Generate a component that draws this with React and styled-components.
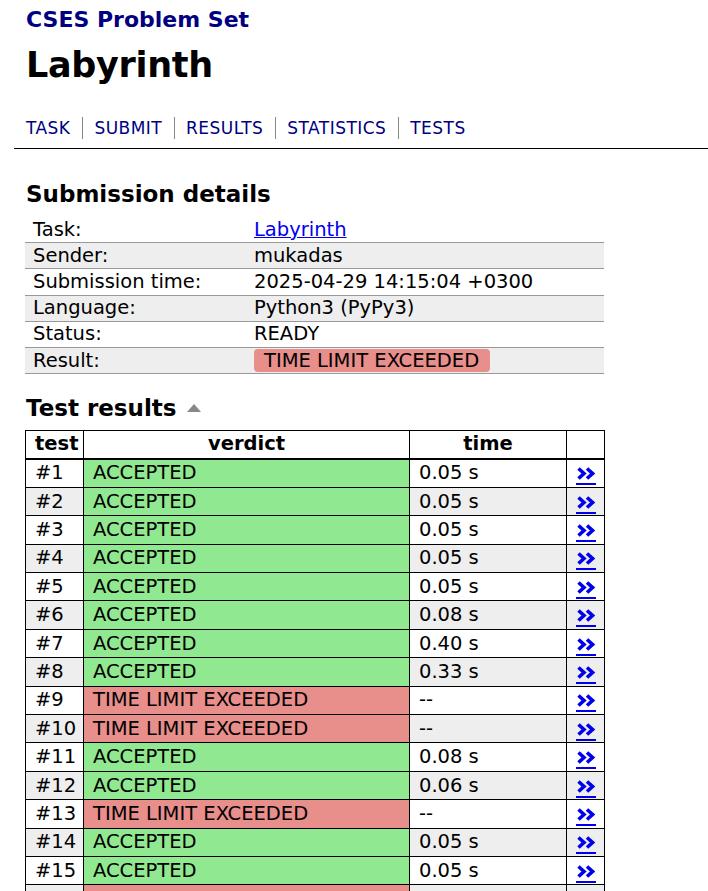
import styled, { createGlobalStyle } from "styled-components";

const GlobalStyle = createGlobalStyle`
  body {
    margin: 0;
    background: #fff;
    color: #000;
    font-family: "DejaVu Sans", Verdana, sans-serif;
    font-size: 19px;
  }
`;

const Header = styled.div`
  padding: 6px 0 0 26px;
`;

const SiteTitle = styled.a`
  display: block;
  font-size: 22px;
  font-weight: 700;
  line-height: 28px;
  color: #000080;
  text-decoration: none;
`;

const Title = styled.h1`
  margin: 6px 0 0;
  font-size: 35px;
  line-height: 50px;
  font-weight: 700;
  letter-spacing: -0.3px;
`;

const NavBar = styled.div`
  margin: 27px 0 0 14px;
  padding: 0 0 9px 12px;
  border-bottom: 1px solid #000;
  display: flex;
`;

const NavLink = styled.a`
  font-size: 17px;
  letter-spacing: 0.45px;
  line-height: 22px;
  color: #000080;
  text-decoration: none;
  padding: 0 12px 0 11px;
  border-left: 1px solid #888;
  &:first-child {
    padding-left: 0;
    border-left: none;
  }
`;

const Content = styled.div`
  padding: 0 0 0 25px;
`;

const Heading = styled.h2`
  margin: ${(p) => p.$mt}px 0 ${(p) => p.$mb}px 1px;
  font-size: 23px;
  line-height: 30px;
  font-weight: 700;
  display: flex;
  align-items: center;
`;

const SortArrow = styled.span`
  display: inline-block;
  width: 0;
  height: 0;
  margin-left: 10px;
  border-left: 7px solid transparent;
  border-right: 7px solid transparent;
  border-bottom: 8px solid #888;
`;

const DetailsTable = styled.table`
  width: 579px;
  table-layout: fixed;
  border-collapse: collapse;
  font-size: 19.5px;
  td {
    height: 25.2px;
    padding: 0 8px;
    border-bottom: 1px solid #999;
    line-height: 22px;
  }
  tr:nth-child(even) td {
    background: #eee;
  }
`;

const LabelCol = styled.col`
  width: 221px;
`;

const TaskLink = styled.a`
  color: #0000ee;
  text-decoration: underline;
`;

const Badge = styled.span`
  display: inline-block;
  background: #e88e8b;
  border-radius: 4px;
  padding: 0 11px 0 10px;
  line-height: 23px;
`;

const ResultsTable = styled.table`
  width: 579px;
  table-layout: fixed;
  border-collapse: collapse;
  font-size: 19.5px;
  th,
  td {
    border: 1px solid #000;
    padding: 0 9px;
    height: 27.4px;
    line-height: 22px;
    white-space: nowrap;
  }
  th {
    height: 26.4px;
    font-weight: 700;
    text-align: center;
    border-bottom: 2px solid #000;
  }
  tr:nth-child(even) td {
    background: #eee;
  }
`;

const Col = styled.col`
  width: ${(p) => p.$w}px;
`;

const Verdict = styled.td`
  tr:nth-child(n) && {
    background: ${(p) => (p.$ok ? "#90e890" : "#e88e8b")};
  }
`;

const ViewLink = styled.a`
  display: inline-block;
  vertical-align: -7px;
  color: #0000ee;
  border-bottom: 2px solid #0000ee;
  padding: 0 1px 3px;
  line-height: 0;
  svg {
    display: block;
  }
`;

const details = [
  ["Task:", <TaskLink href="#">Labyrinth</TaskLink>],
  ["Sender:", "mukadas"],
  ["Submission time:", "2025-04-29 14:15:04 +0300"],
  ["Language:", "Python3 (PyPy3)"],
  ["Status:", "READY"],
  ["Result:", <Badge>TIME LIMIT EXCEEDED</Badge>],
];

const tests = [
  ["0.05 s", true],
  ["0.05 s", true],
  ["0.05 s", true],
  ["0.05 s", true],
  ["0.05 s", true],
  ["0.08 s", true],
  ["0.40 s", true],
  ["0.33 s", true],
  ["--", false],
  ["--", false],
  ["0.08 s", true],
  ["0.06 s", true],
  ["--", false],
  ["0.05 s", true],
  ["0.05 s", true],
  ["--", false],
];

function Chevrons() {
  return (
    <svg width="18" height="13" viewBox="0 0 18 13">
      <path
        d="M1.5 1.5 L7 6.5 L1.5 11.5 M10 1.5 L15.5 6.5 L10 11.5"
        fill="none"
        stroke="currentColor"
        strokeWidth="3.6"
      />
    </svg>
  );
}

export default function App() {
  return (
    <>
      <GlobalStyle />
      <Header>
        <SiteTitle href="#">CSES Problem Set</SiteTitle>
        <Title>Labyrinth</Title>
      </Header>
      <NavBar>
        <NavLink href="#">TASK</NavLink>
        <NavLink href="#">SUBMIT</NavLink>
        <NavLink href="#">RESULTS</NavLink>
        <NavLink href="#">STATISTICS</NavLink>
        <NavLink href="#">TESTS</NavLink>
      </NavBar>
      <Content>
        <Heading $mt={30} $mb={8}>Submission details</Heading>
        <DetailsTable>
          <colgroup>
            <LabelCol />
            <col />
          </colgroup>
          <tbody>
            {details.map(([k, v]) => (
              <tr key={k}>
                <td>{k}</td>
                <td>{v}</td>
              </tr>
            ))}
          </tbody>
        </DetailsTable>
        <Heading $mt={19} $mb={7}>
          Test results <SortArrow />
        </Heading>
        <ResultsTable>
          <colgroup>
            <Col $w={58} />
            <Col $w={326} />
            <Col $w={157} />
            <Col $w={38} />
          </colgroup>
          <thead>
            <tr>
              <th>test</th>
              <th>verdict</th>
              <th>time</th>
              <th></th>
            </tr>
          </thead>
          <tbody>
            {tests.map(([t, ok], i) => (
              <tr key={i}>
                <td>#{i + 1}</td>
                <Verdict $ok={ok}>{ok ? "ACCEPTED" : "TIME LIMIT EXCEEDED"}</Verdict>
                <td>{t}</td>
                <td>
                  <ViewLink href="#">
                    <Chevrons />
                  </ViewLink>
                </td>
              </tr>
            ))}
          </tbody>
        </ResultsTable>
      </Content>
    </>
  );
}
